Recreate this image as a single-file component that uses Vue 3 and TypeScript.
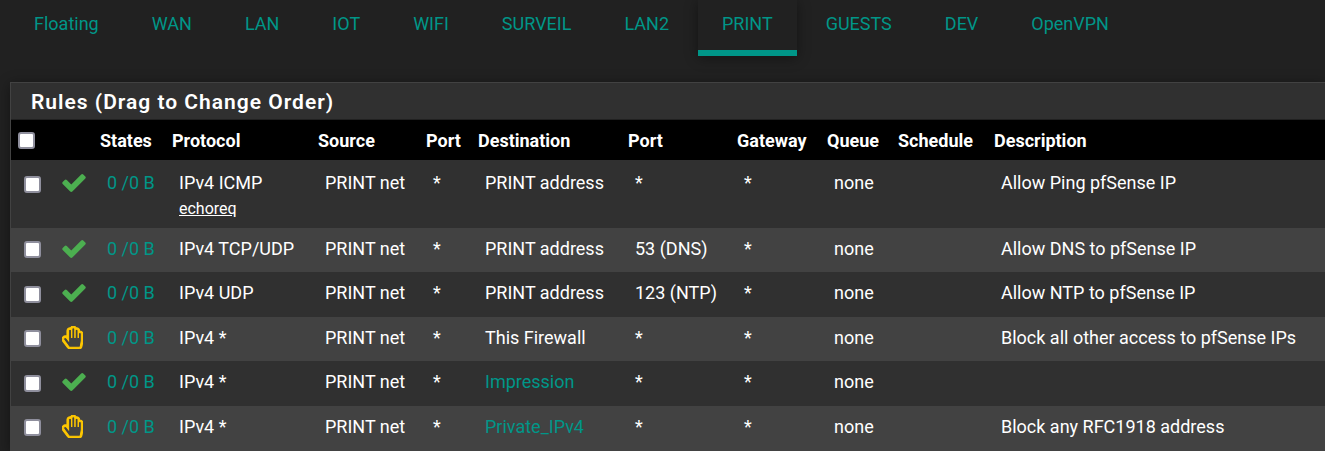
<script setup lang="ts">
import { ref, computed } from 'vue'

interface Rule {
  pass: boolean
  protocol: string
  subtype?: string
  destination: string
  alias?: boolean
  port: string
  description: string
}

const tabs = ['Floating', 'WAN', 'LAN', 'IOT', 'WIFI', 'SURVEIL', 'LAN2', 'PRINT', 'GUESTS', 'DEV', 'OpenVPN']
const activeTab = ref('PRINT')

const columns = ['States', 'Protocol', 'Source', 'Port', 'Destination', 'Port', 'Gateway', 'Queue', 'Schedule', 'Description']

const rules: Rule[] = [
  { pass: true, protocol: 'IPv4 ICMP', subtype: 'echoreq', destination: 'PRINT address', port: '*', description: 'Allow Ping pfSense IP' },
  { pass: true, protocol: 'IPv4 TCP/UDP', destination: 'PRINT address', port: '53 (DNS)', description: 'Allow DNS to pfSense IP' },
  { pass: true, protocol: 'IPv4 UDP', destination: 'PRINT address', port: '123 (NTP)', description: 'Allow NTP to pfSense IP' },
  { pass: false, protocol: 'IPv4 *', destination: 'This Firewall', port: '*', description: 'Block all other access to pfSense IPs' },
  { pass: true, protocol: 'IPv4 *', destination: 'Impression', alias: true, port: '*', description: '' },
  { pass: false, protocol: 'IPv4 *', destination: 'Private_IPv4', alias: true, port: '*', description: 'Block any RFC1918 address' },
]

const selected = ref<number[]>([])
const allSelected = computed({
  get: () => selected.value.length === rules.length,
  set: (on: boolean) => {
    selected.value = on ? rules.map((_, i) => i) : []
  },
})
</script>

<template>
  <div class="page">
    <nav class="tabs" aria-label="Interfaces">
      <a
        v-for="tab in tabs"
        :key="tab"
        href="#"
        class="tab"
        :class="{ active: tab === activeTab }"
        @click.prevent="activeTab = tab"
      >{{ tab }}</a>
    </nav>

    <section class="panel">
      <h2 class="title">Rules (Drag to Change Order)</h2>
      <table class="rules">
        <colgroup>
          <col class="c-check" />
          <col class="c-icon" />
          <col class="c-states" />
          <col class="c-protocol" />
          <col class="c-source" />
          <col class="c-sport" />
          <col class="c-dest" />
          <col class="c-dport" />
          <col class="c-gateway" />
          <col class="c-queue" />
          <col class="c-schedule" />
          <col />
        </colgroup>
        <thead>
          <tr>
            <th><input v-model="allSelected" type="checkbox" class="box" aria-label="Select all rules" /></th>
            <th></th>
            <th v-for="(name, i) in columns" :key="i" scope="col">{{ name }}</th>
          </tr>
        </thead>
        <tbody>
          <tr v-for="(rule, i) in rules" :key="i">
            <td class="pick">
              <input v-model="selected" type="checkbox" class="box" :value="i" :aria-label="`Select rule ${i + 1}`" />
            </td>
            <td :class="rule.pass ? 'pass' : 'block'">
              <svg v-if="rule.pass" class="icon-check" viewBox="121 334 1550 1188" role="img" aria-label="Pass">
                <path d="M1671 566q0 40-28 68l-724 724-136 136q-28 28-68 28t-68-28l-136-136-362-362q-28-28-28-68t28-68l136-136q28-28 68-28t68 28l294 295 656-657q28-28 68-28t68 28l136 136q28 28 28 68z" />
              </svg>
              <svg v-else class="icon-hand" viewBox="0 0 1632 1792" role="img" aria-label="Block">
                <path d="M880 128q-46 0-79 33t-33 79v656h-32v-528q0-46-33-79t-79-33-79 33-33 79v528 256l-154-205q-38-51-102-51-53 0-90.500 37.500t-37.500 90.500q0 43 26 77l384 512q38 51 102 51h688q34 0 61-22t34-56l76-405q5-32 5-59v-498q0-46-33-79t-79-33-79 33-33 79v272h-32v-528q0-46-33-79t-79-33-79 33-33 79v528h-32v-656q0-46-33-79t-79-33zm0-128q68 0 125.500 35.500t88.500 96.500q19-4 42-4 99 0 169.500 70.500t70.500 169.500v17q105-6 180.500 64t75.500 175v498q0 40-8 83l-76 404q-14 79-76.500 131t-143.500 52h-688q-60 0-114.500-27.500t-90.500-74.500l-384-512q-51-68-51-154 0-106 75-181t181-75q78 0 128 34v-434q0-99 70.500-169.500t169.500-70.500q23 0 42 4 31-61 88.500-96.500t125.500-35.500z" />
              </svg>
            </td>
            <td><a href="#" @click.prevent>0 /0 B</a></td>
            <td>
              {{ rule.protocol }}
              <div v-if="rule.subtype" class="subtype">{{ rule.subtype }}</div>
            </td>
            <td>PRINT net</td>
            <td>*</td>
            <td>
              <a v-if="rule.alias" href="#" @click.prevent>{{ rule.destination }}</a>
              <template v-else>{{ rule.destination }}</template>
            </td>
            <td>{{ rule.port }}</td>
            <td>*</td>
            <td>none</td>
            <td></td>
            <td>{{ rule.description }}</td>
          </tr>
        </tbody>
      </table>
    </section>
  </div>
</template>

<style>
html,
body {
  background: #212121;
}
</style>

<style scoped>
.page {
  padding-left: 10px;
  overflow: hidden;
  font-family: Roboto, "Liberation Sans", sans-serif;
  font-size: 18px;
  line-height: 26px;
  color: #fff;
}

a {
  color: #009688;
  text-decoration: none;
}

.tabs {
  display: flex;
  gap: 5px;
  margin-bottom: 26px;
}

.tab {
  padding: 11px 24px 13px;
  border-bottom: 6px solid transparent;
}

.tab.active {
  border-bottom-color: #009688;
  box-shadow: 0 2px 12px rgba(0, 0, 0, 0.4);
}

.panel {
  border-top: 1px solid #424242;
  border-left: 1px solid #424242;
  background: #303030;
  box-shadow: 0 2px 12px rgba(0, 0, 0, 0.4);
}

.title {
  margin: 0;
  padding: 6px 20px 4px;
  border-bottom: 1px solid #212121;
  font-size: 21px;
  font-weight: 600;
  letter-spacing: 1px;
}

.rules {
  width: 100%;
  table-layout: fixed;
  border-collapse: separate;
  border-spacing: 0;
  white-space: nowrap;
}

.c-check { width: 38px; }
.c-icon { width: 45px; }
.c-states { width: 72px; }
.c-protocol { width: 146px; }
.c-source { width: 108px; }
.c-sport { width: 52px; }
.c-dest { width: 150px; }
.c-dport { width: 109px; }
.c-gateway { width: 90px; }
.c-queue { width: 71px; }
.c-schedule { width: 96px; }

th {
  padding: 8px 0 6px 6px;
  background: #000;
  font-weight: 700;
  text-align: left;
  vertical-align: top;
}

td {
  box-sizing: border-box;
  height: 45px;
  padding: 8px 0 6px 13px;
  vertical-align: top;
}

tr:nth-child(even) td {
  height: 44px;
  background: #424242;
}

tr:first-child td {
  height: 68px;
  border-top: 2px solid #303030;
}

tr:last-child td {
  height: 45px;
}

td.pick {
  padding-top: 14px;
}

tr:nth-child(even) td.pick {
  padding-top: 13px;
}

td.pass {
  padding-top: 12px;
}

td.block {
  padding-top: 9px;
}

.box {
  display: block;
  appearance: none;
  box-sizing: border-box;
  width: 17px;
  height: 17px;
  margin: 0;
  border: 2px solid #8f8f9d;
  border-radius: 3px;
  background: #fff;
}

th .box {
  margin: 4px 0 0 1px;
}

.box:checked {
  background: #009688;
}

.icon-check {
  display: block;
  width: 24px;
  height: 18px;
  fill: #4caf50;
}

.icon-hand {
  display: block;
  width: 21px;
  height: 23px;
  fill: #ffc800;
  stroke: #ffc800;
  stroke-width: 80px;
}

.subtype {
  font-size: 16px;
  text-decoration: underline;
}
</style>
